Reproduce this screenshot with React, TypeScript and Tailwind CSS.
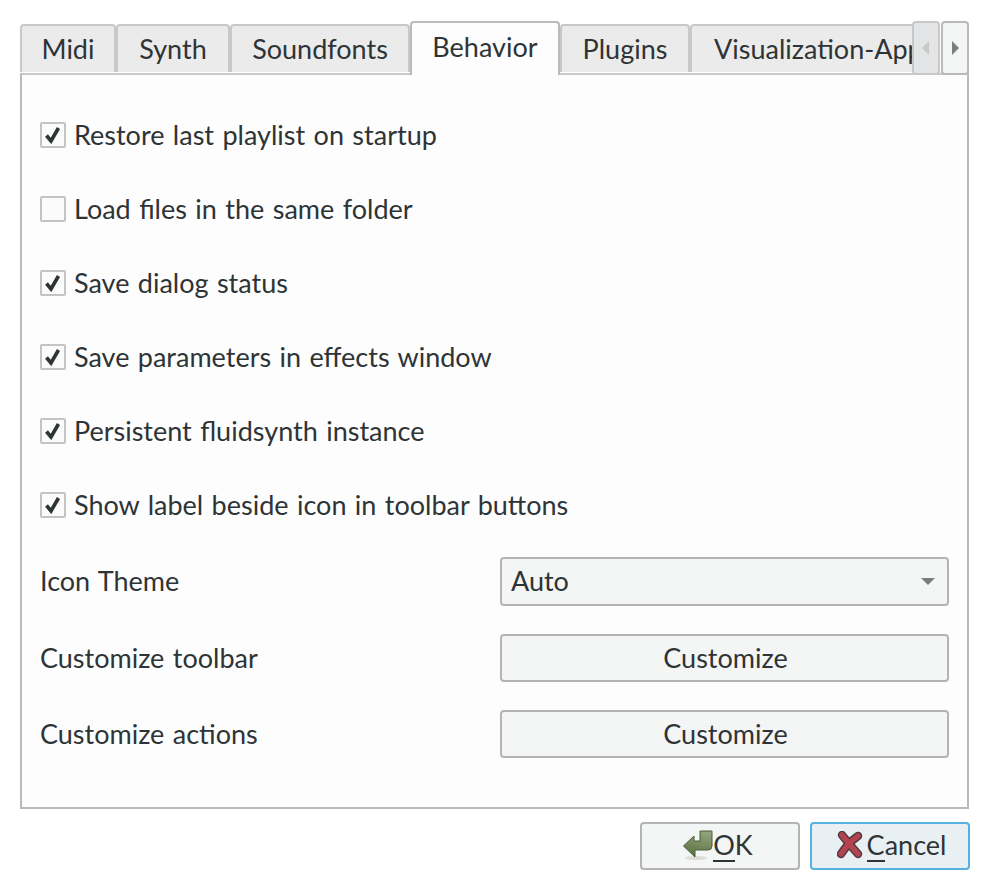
import React from 'react';

const tabs = [
  { label: 'Midi', width: 'w-[96px]' },
  { label: 'Synth', width: 'w-[114px]' },
  { label: 'Soundfonts', width: 'w-[180px]' },
  { label: 'Behavior', width: 'w-[150px]', active: true },
  { label: 'Plugins', width: 'w-[130px]' },
  { label: 'Visualization-Applet', width: 'w-[300px]' },
];

const checks = [
  { label: 'Restore last playlist on startup', checked: true },
  { label: 'Load files in the same folder', checked: false },
  { label: 'Save dialog status', checked: true },
  { label: 'Save parameters in effects window', checked: true },
  { label: 'Persistent fluidsynth instance', checked: true },
  { label: 'Show label beside icon in toolbar buttons', checked: true },
];

const CheckRow = ({ label, checked }: { label: string; checked: boolean }) => (
  <div className="flex h-[74px] items-center">
    <div className="flex h-[26px] w-[26px] items-center justify-center rounded-[2px] border-2 border-[#c4c4c4] bg-[#fbfbfb]">
      {checked && (
        <svg width="18" height="18" viewBox="0 0 18 18">
          <path d="M2.5 9.5 L7 15 L14.5 2" fill="none" stroke="#2e3436" strokeWidth="3.6" />
        </svg>
      )}
    </div>
    <span className="ml-[8px]">{label}</span>
  </div>
);

const ArrowIcon = () => (
  <svg width="30" height="31" viewBox="0 0 30 31" className="shrink-0">
    <defs>
      <linearGradient id="okArrow" x1="0.6" y1="0" x2="0.3" y2="1">
        <stop offset="0" stopColor="#93a37a" />
        <stop offset="1" stopColor="#56703f" />
      </linearGradient>
    </defs>
    <ellipse cx="13" cy="28" rx="11" ry="2" fill="#dcdcd8" />
    <path d="M17 1 H29 V16 Q29 20 25 20 H12 V27 L0.5 16 L11 6 V11 H17 Z" fill="url(#okArrow)" stroke="#4d5c3b" strokeWidth="1" strokeLinejoin="round" />
  </svg>
);

const CancelIcon = () => (
  <svg width="26" height="28" viewBox="0 0 26 28" className="shrink-0">
    <g fill="none" strokeLinecap="round">
      <path d="M5 4 Q12 13 21 23" stroke="#4f3b3e" strokeWidth="8.5" />
      <path d="M21 5 Q11 12 4 23" stroke="#4f3b3e" strokeWidth="8.5" />
      <path d="M5 4 Q12 13 21 23" stroke="#b4434f" strokeWidth="5.5" />
      <path d="M21 5 Q11 12 4 23" stroke="#b4434f" strokeWidth="5.5" />
    </g>
  </svg>
);

const Mnemonic = ({ children }: { children: string }) => (
  <span className="relative">
    {children}
    <span className="absolute bottom-[-1px] left-0 h-[2px] w-full bg-[#2e3436]" />
  </span>
);

export default function App() {
  return (
    <div className="h-[890px] w-[990px] bg-white px-[20px] pt-[21px] font-['Lato',sans-serif] text-[27px] text-[#2e3436] [word-spacing:1.5px]">
      <div className="relative z-10 flex h-[54px] w-[949px]">
        <div className="flex w-[893px] items-start overflow-hidden">
          {tabs.map((t) =>
            t.active ? (
              <div
                key={t.label}
                className={`${t.width} flex h-[54px] shrink-0 items-center justify-center rounded-t-[4px] border-2 border-b-0 border-[#bababa] bg-[#fdfdfd] pb-[4px]`}
              >
                {t.label}
              </div>
            ) : (
              <div
                key={t.label}
                className={`${t.width} mt-[3px] flex h-[48px] shrink-0 items-center justify-center whitespace-nowrap rounded-t-[4px] border-2 border-b-0 border-[#c8c8c8] bg-[#ebebeb] last:justify-start last:pl-[22px]`}
              >
                {t.label}
              </div>
            ),
          )}
        </div>
        <div className="flex h-[54px] w-[28px] items-center justify-center rounded-[4px] border-2 border-[#c8c8c8] bg-[#e4e5e6]">
          <svg width="8" height="14" viewBox="0 0 8 14"><path d="M7 0 V14 L0 7 Z" fill="#c6c8c8" /></svg>
        </div>
        <div className="ml-[1px] flex h-[54px] w-[28px] items-center justify-center rounded-[4px] border-2 border-[#bababa] bg-[#f4f5f5]">
          <svg width="8" height="14" viewBox="0 0 8 14"><path d="M1 0 V14 L8 7 Z" fill="#7c7e7e" /></svg>
        </div>
      </div>

      <div className="-mt-[2px] h-[736px] w-[949px] border-2 border-[#bababa] border-t-[#c8c8c8] bg-[#fdfdfd] pl-[18px] pr-[18px] pt-[23px]">
        {checks.map((c) => (
          <CheckRow key={c.label} label={c.label} checked={c.checked} />
        ))}
        <div className="mt-[15px] grid grid-cols-[460px_1fr] items-center gap-y-[28px]">
          <span>Icon Theme</span>
          <div className="flex h-[49px] items-center justify-between rounded-[4px] border-2 border-[#b4b4b4] bg-[#f4f5f5] pl-[9px] pr-[12px]">
            <span>Auto</span>
            <svg width="14" height="7" viewBox="0 0 14 7"><path d="M0 0 H14 L7 7 Z" fill="#7c7e7e" /></svg>
          </div>
          <span>Customize toolbar</span>
          <div className="flex h-[48px] items-center justify-center rounded-[4px] border-2 border-[#b4b4b4] bg-[#f4f5f5] pl-[2px]">Customize</div>
          <span>Customize actions</span>
          <div className="flex h-[48px] items-center justify-center rounded-[4px] border-2 border-[#b4b4b4] bg-[#f4f5f5] pl-[2px]">Customize</div>
        </div>
      </div>

      <div className="mt-[13px] flex w-[950px] justify-end gap-[10px]">
        <div className="flex h-[48px] w-[160px] items-center justify-center rounded-[4px] border-2 border-[#b4b4b4] bg-[#f4f5f5] pb-[2px] pr-[4px]">
          <ArrowIcon />
          <span><Mnemonic>O</Mnemonic>K</span>
        </div>
        <div className="flex h-[48px] w-[160px] items-center justify-center gap-[4px] rounded-[4px] border-2 border-[#55b1e0] bg-[#e9f0f4] pb-[2px] pl-[3px]">
          <CancelIcon />
          <span><Mnemonic>C</Mnemonic>ancel</span>
        </div>
      </div>
    </div>
  );
}
